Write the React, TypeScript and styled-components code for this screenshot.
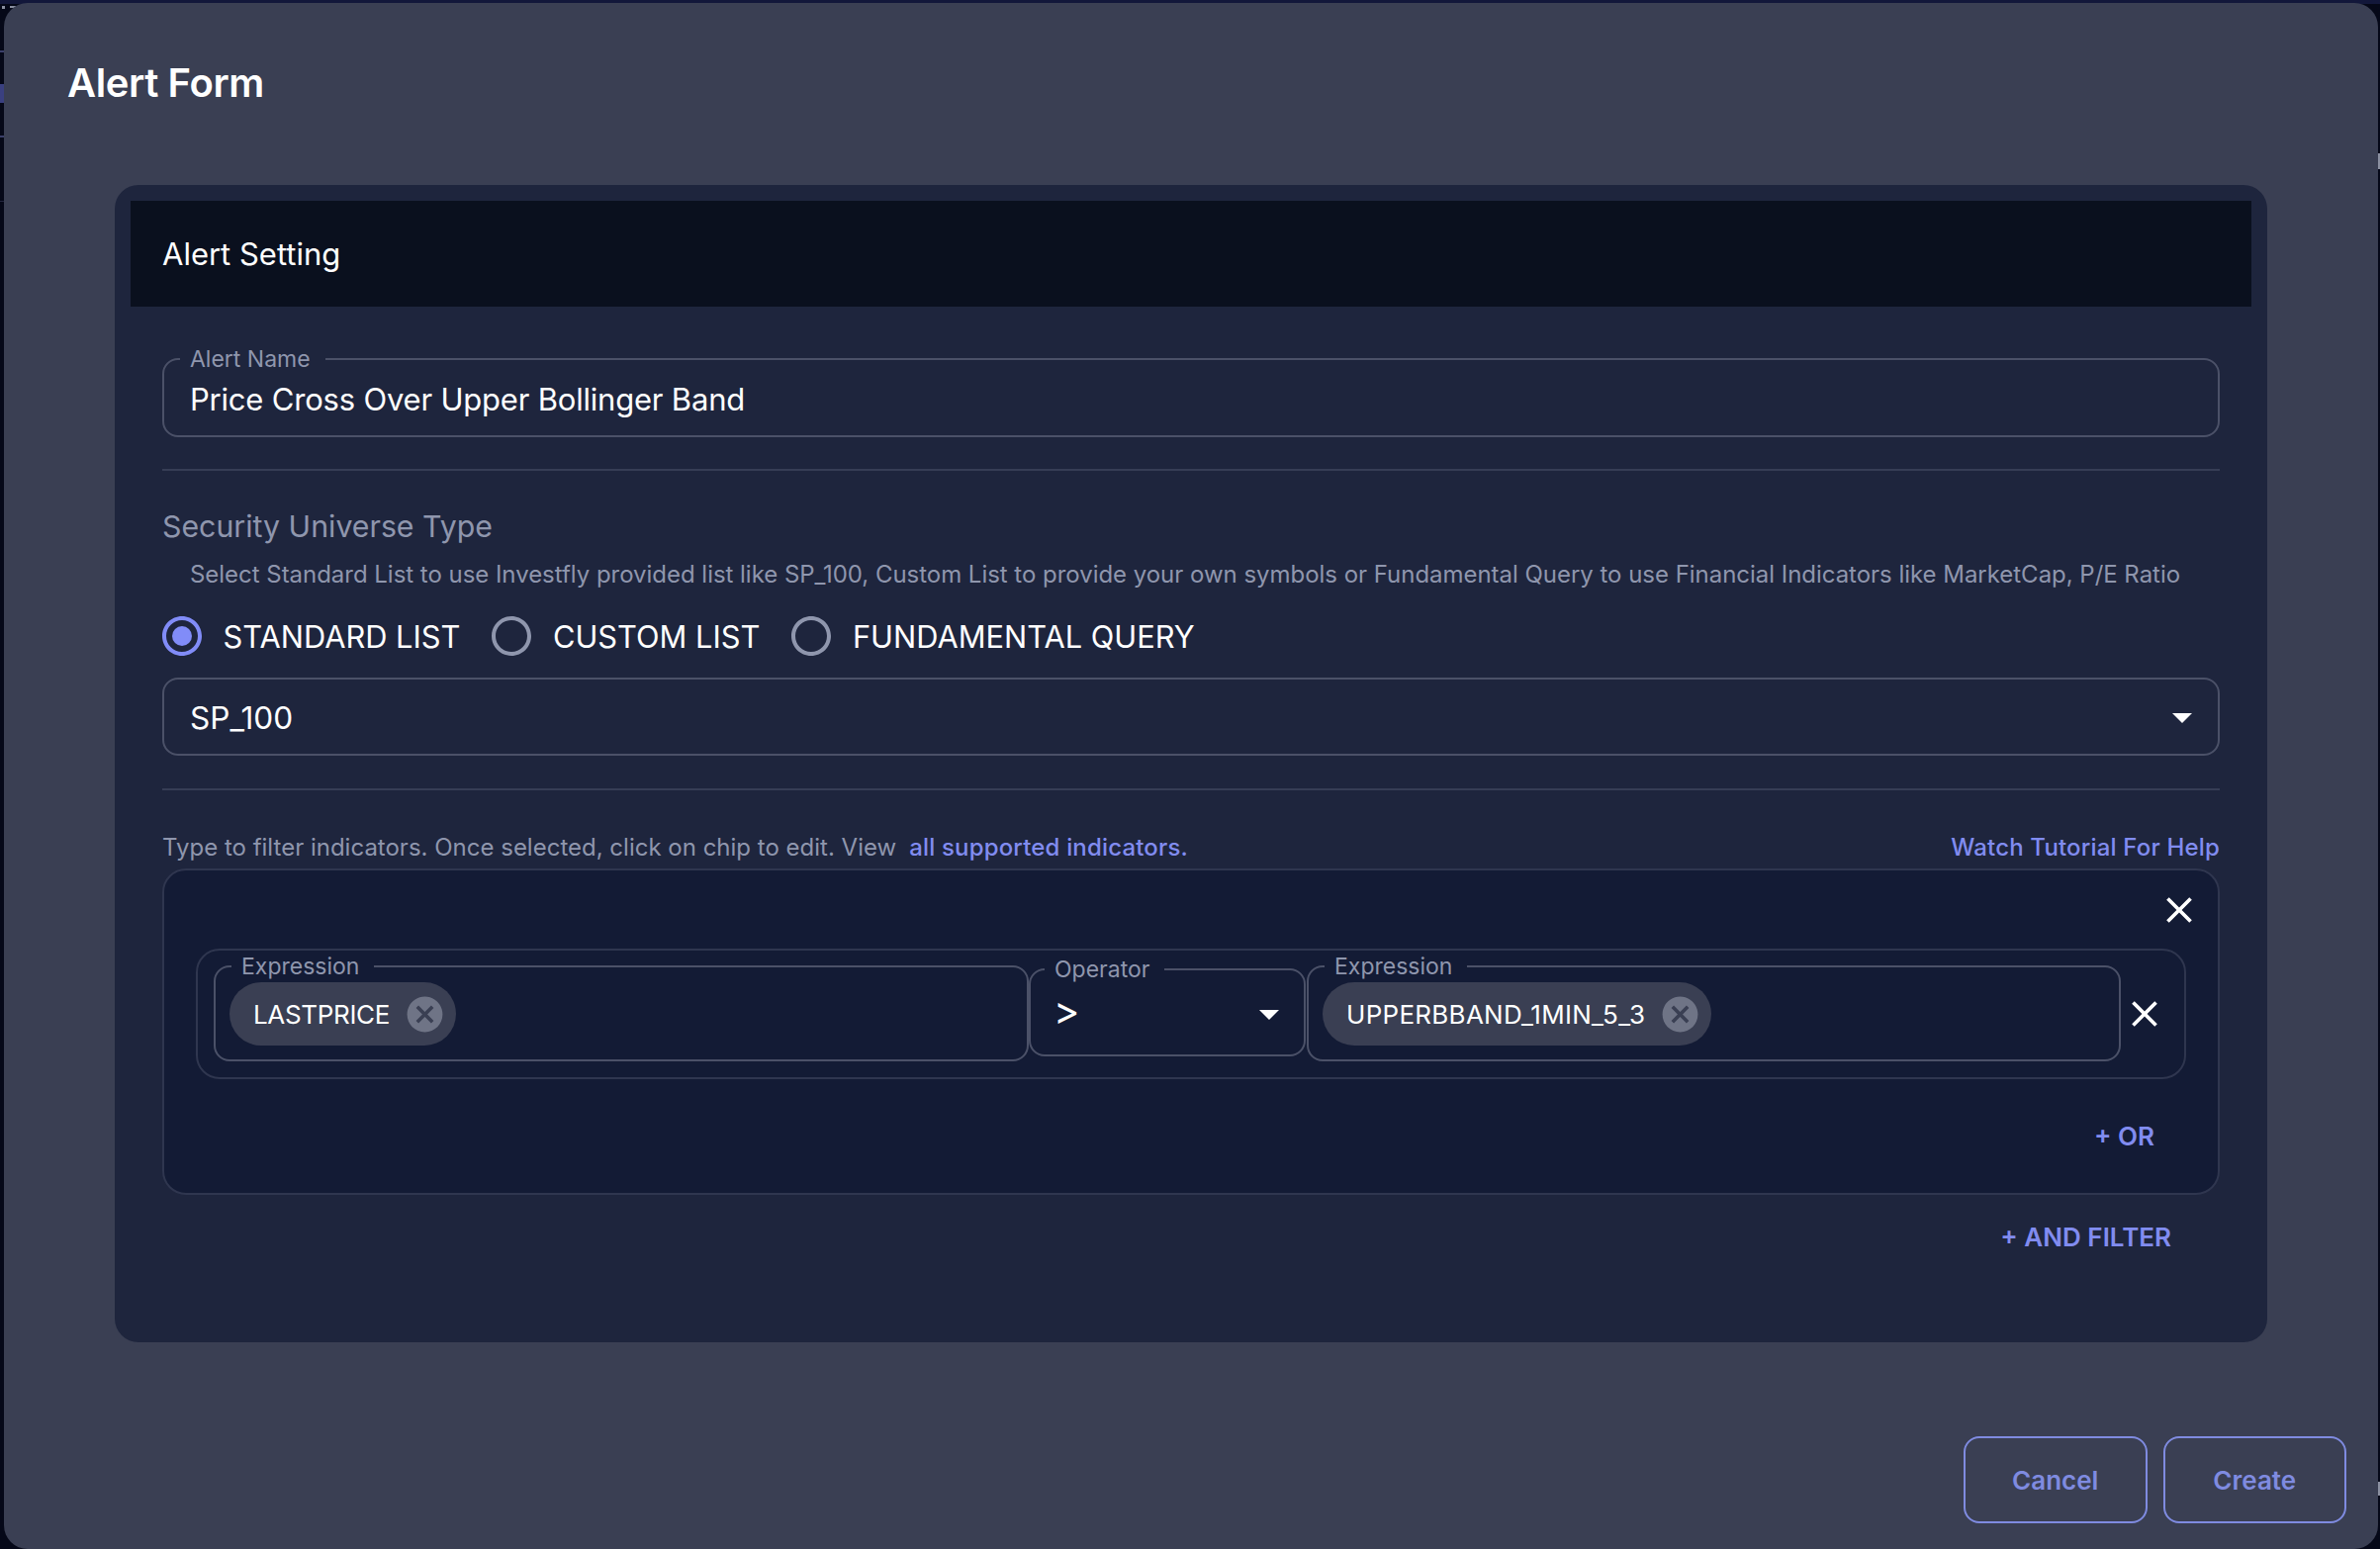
import styled, { createGlobalStyle } from 'styled-components';

const GlobalStyle = createGlobalStyle`
  html, body {
    margin: 0;
    padding: 0;
    background: #050818;
    font-family: Inter, "Liberation Sans", sans-serif;
    color: #ffffff;
  }
  * { box-sizing: border-box; }
`;

const Page = styled.div`
  position: relative;
  height: 1566px;
  padding: 3px 2px 0 4px;
  overflow: hidden;
  background: linear-gradient(#12173a 0 4px, #050818 4px);
`;

// bits of the app behind the dialog that peek out along its edges
const BackdropMark = styled.i<{ $x: number; $y: number; $w: number; $h: number; $color: string }>`
  position: absolute;
  left: ${({ $x }) => $x}px;
  top: ${({ $y }) => $y}px;
  width: ${({ $w }) => $w}px;
  height: ${({ $h }) => $h}px;
  background: ${({ $color }) => $color};
`;

const Modal = styled.div`
  position: relative;
  height: 1563px;
  display: flex;
  flex-direction: column;
  background: #3a3f53;
  border-radius: 24px;
`;

const ModalTitle = styled.h2`
  margin: 0;
  height: 184px;
  padding: 57px 0 0 64px;
  font-size: 40px;
  letter-spacing: -0.4px;
  line-height: 48px;
  font-weight: 600;
`;

const Card = styled.section`
  margin: 0 112px;
  height: 1170px;
  padding: 16px;
  background: #1e253d;
  border-radius: 24px;
`;

const CardHeader = styled.div`
  height: 107px;
  padding-left: 32px;
  display: flex;
  align-items: center;
  background: #0a101e;
  font-size: 31px;
  font-weight: 400;
`;

const CardBody = styled.div`
  padding: 40px 32px 0;
`;

const Outline = styled.fieldset<{ $height: number }>`
  margin: 0;
  min-width: 0;
  height: ${({ $height }) => $height}px;
  padding: 0 26px;
  border: 2px solid #4b5168;
  border-radius: 16px;
`;

const Legend = styled.legend<{ $offset: number }>`
  padding: 0 15px 0 10px;
  margin-left: ${({ $offset }) => $offset}px;
  font-size: 23px;
  line-height: 26px;
  color: #8f96ad;
`;

const NameValue = styled.div`
  padding-top: 6px;
  font-size: 31px;
  letter-spacing: -0.2px;
  line-height: 44px;
`;

const Divider = styled.hr`
  margin: 0;
  border: 0;
  height: 2px;
  background: #363d55;
`;

const NameDivider = styled(Divider)`
  margin-top: 32px;
`;

const SectionTitle = styled.div`
  margin-top: 34px;
  font-size: 30.3px;
  line-height: 44px;
  color: #8f96ad;
`;

const SectionHint = styled.p`
  margin: 9px 0 0 28px;
  font-size: 24px;
  letter-spacing: -0.03px;
  line-height: 36px;
  color: #8f96ad;
  white-space: nowrap;
`;

const RadioRow = styled.div`
  margin-top: 20px;
  display: flex;
  gap: 32px;
`;

const RadioOption = styled.label`
  display: flex;
  align-items: center;
  height: 48px;
  gap: 17.5px;
  margin-left: -4px;
  font-size: 30.8px;
`;

const Select = styled.div`
  margin-top: 18px;
  height: 79px;
  padding: 0 26px;
  display: flex;
  align-items: center;
  justify-content: space-between;
  border: 2px solid #4b5168;
  border-radius: 16px;
  font-size: 31.6px;
`;

const SelectText = styled.span`
  padding-top: 2px;
`;

const SelectCaret = styled.span`
  display: flex;
  margin-right: -14px;
`;

const SelectDivider = styled(Divider)`
  margin-top: 33px;
`;

const FilterHint = styled.div`
  margin-top: 40px;
  display: flex;
  justify-content: space-between;
  font-size: 24px;
  line-height: 36px;
  color: #8f96ad;
`;

const Link = styled.a`
  color: #818cf0;
  font-weight: 500;
  letter-spacing: 0.17px;
`;

const IndicatorLink = styled(Link)`
  margin-left: 13px;
`;

const FilterBox = styled.div`
  margin-top: 3px;
  height: 330px;
  padding: 0 32px;
  display: flex;
  flex-direction: column;
  background: #131b35;
  border: 2px solid #2f364f;
  border-radius: 24px;
`;

const CloseRow = styled.div`
  flex: none;
  height: 79px;
  margin-right: -19px;
  display: flex;
  justify-content: flex-end;
  align-items: center;
  padding-right: 4px;
`;

const ConditionRow = styled.div`
  flex: none;
  height: 132px;
  padding: 3px 16px 0 16px;
  display: flex;
  align-items: flex-start;
  border: 2px solid #2f364f;
  border-radius: 24px;
`;

const ExpressionField = styled(Outline)<{ $width: number }>`
  flex: 0 0 ${({ $width }) => $width}px;
  width: ${({ $width }) => $width}px;
  padding: 0 14px;
`;

const OperatorField = styled(Outline)`
  flex: 0 0 280px;
  margin: 3px 1px 0 0;
  padding: 0 26px;
`;

const OperatorValue = styled.div`
  display: flex;
  justify-content: space-between;
  align-items: center;
  height: 52px;
  margin: 6px -15px 0 -3px;
  font-size: 40px;
  line-height: 44px;
`;

const OperatorSign = styled.span`
  margin-bottom: 6px;
`;

const Chip = styled.div<{ $tracking: number }>`
  display: inline-flex;
  align-items: center;
  height: 64px;
  padding: 0 10px 0 24px;
  gap: 14px;
  margin-top: 3px;
  background: #3a3f53;
  border-radius: 32px;
  font-size: 26px;
  letter-spacing: ${({ $tracking }) => $tracking}px;
  white-space: nowrap;
`;

const RowClose = styled.div`
  flex: 1;
  display: flex;
  align-items: center;
  height: 122px;
  padding-left: 2px;
`;

const OrRow = styled.div`
  margin-top: 42px;
  padding-right: 32px;
  text-align: right;
`;

const TextAction = styled.span`
  color: #818cf0;
  font-size: 26px;
  font-weight: 600;
  line-height: 32px;
`;

const AndRow = styled.div`
  margin-top: 27px;
  padding-right: 49px;
  text-align: right;
`;

const Footer = styled.footer`
  margin-top: 95px;
  padding-right: 32px;
  display: flex;
  justify-content: flex-end;
  gap: 16px;
`;

const Button = styled.button`
  width: 185.5px;
  height: 88px;
  background: transparent;
  border: 2px solid #7f8be0;
  border-radius: 16px;
  color: #7f8be0;
  font-family: inherit;
  font-size: 26px;
  font-weight: 600;
`;

const CloseIcon = ({ size }: { size: number }) => (
  <svg width={size} height={size} viewBox="0 0 24 24" fill="#fff">
    <path d="M19 6.41 17.59 5 12 10.59 6.41 5 5 6.41 10.59 12 5 17.59 6.41 19 12 13.41 17.59 19 19 17.59 13.41 12z" />
  </svg>
);

const DeleteIcon = () => (
  <svg width={43} height={43} viewBox="0 0 24 24" fill="#6f7486">
    <path d="M12 2C6.47 2 2 6.47 2 12s4.47 10 10 10 10-4.47 10-10S17.53 2 12 2zm5 13.59L15.59 17 12 13.41 8.41 17 7 15.59 10.59 12 7 8.41 8.41 7 12 10.59 15.59 7 17 8.41 13.41 12 17 15.59z" />
  </svg>
);

const CaretIcon = () => (
  <svg width={48} height={48} viewBox="0 0 24 24" fill="#fff">
    <path d="M7 10l5 5 5-5z" />
  </svg>
);

const RadioIcon = ({ checked }: { checked?: boolean }) => (
  <svg width={48} height={48} viewBox="0 0 24 24" fill={checked ? '#818cf8' : '#8f96ad'}>
    <path d="M12 2C6.48 2 2 6.48 2 12s4.48 10 10 10 10-4.48 10-10S17.52 2 12 2zm0 18c-4.42 0-8-3.58-8-8s3.58-8 8-8 8 3.58 8 8-3.58 8-8 8z" />
    {checked && <circle cx="12" cy="12" r="5" />}
  </svg>
);

const universes = [
  { label: 'STANDARD LIST', checked: true },
  { label: 'CUSTOM LIST', checked: false },
  { label: 'FUNDAMENTAL QUERY', checked: false },
];

const backdropMarks = [
  { x: 2, y: 6, w: 3, h: 3, color: '#8a8fa0' },
  { x: 10, y: 6, w: 6, h: 2, color: '#8a8fa0' },
  { x: 0, y: 51, w: 4, h: 2, color: '#3a3f6a' },
  { x: 0, y: 85, w: 4, h: 19, color: '#3a4080' },
  { x: 0, y: 137, w: 4, h: 2, color: '#3a3f6a' },
  { x: 0, y: 203, w: 4, h: 1, color: '#23263f' },
  { x: 2404, y: 155, w: 2, h: 16, color: '#8a8fa0' },
  { x: 2404, y: 1498, w: 2, h: 14, color: '#8a8fa0' },
];

export default function App() {
  return (
    <Page>
      <GlobalStyle />
      {backdropMarks.map((m) => (
        <BackdropMark key={`${m.x}-${m.y}`} $x={m.x} $y={m.y} $w={m.w} $h={m.h} $color={m.color} />
      ))}
      <Modal>
        <ModalTitle>Alert Form</ModalTitle>
        <Card>
          <CardHeader>Alert Setting</CardHeader>
          <CardBody>
            <Outline $height={92}>
              <Legend $offset={-10}>Alert Name</Legend>
              <NameValue>Price Cross Over Upper Bollinger Band</NameValue>
            </Outline>
            <NameDivider />
            <SectionTitle>Security Universe Type</SectionTitle>
            <SectionHint>
              Select Standard List to use Investfly provided list like SP_100, Custom List to provide your own symbols or Fundamental Query to use Financial Indicators like MarketCap, P/E Ratio
            </SectionHint>
            <RadioRow>
              {universes.map((u) => (
                <RadioOption key={u.label}>
                  <RadioIcon checked={u.checked} />
                  {u.label}
                </RadioOption>
              ))}
            </RadioRow>
            <Select>
              <SelectText>SP_100</SelectText>
              <SelectCaret>
                <CaretIcon />
              </SelectCaret>
            </Select>
            <SelectDivider />
            <FilterHint>
              <span>
                Type to filter indicators. Once selected, click on chip to edit. View
                <IndicatorLink>all supported indicators.</IndicatorLink>
              </span>
              <Link>Watch Tutorial For Help</Link>
            </FilterHint>
            <FilterBox>
              <CloseRow>
                <CloseIcon size={44} />
              </CloseRow>
              <ConditionRow>
                <ExpressionField $height={109} $width={824}>
                  <Legend $offset={2}>Expression</Legend>
                  <Chip $tracking={-0.33}>
                    LASTPRICE
                    <DeleteIcon />
                  </Chip>
                </ExpressionField>
                <OperatorField $height={101}>
                  <Legend $offset={-12}>Operator</Legend>
                  <OperatorValue>
                    <OperatorSign>&gt;</OperatorSign>
                    <CaretIcon />
                  </OperatorValue>
                </OperatorField>
                <ExpressionField $height={109} $width={823}>
                  <Legend $offset={2}>Expression</Legend>
                  <Chip $tracking={0.28}>
                    UPPERBBAND_1MIN_5_3
                    <DeleteIcon />
                  </Chip>
                </ExpressionField>
                <RowClose>
                  <CloseIcon size={44} />
                </RowClose>
              </ConditionRow>
              <OrRow>
                <TextAction>+ OR</TextAction>
              </OrRow>
            </FilterBox>
            <AndRow>
              <TextAction>+ AND FILTER</TextAction>
            </AndRow>
          </CardBody>
        </Card>
        <Footer>
          <Button>Cancel</Button>
          <Button>Create</Button>
        </Footer>
      </Modal>
    </Page>
  );
}
